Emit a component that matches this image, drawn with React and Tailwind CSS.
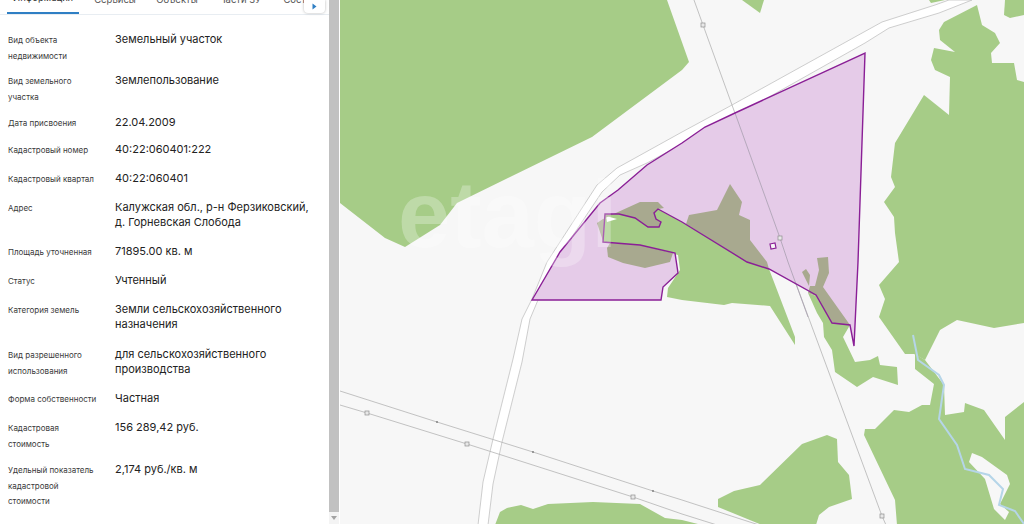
const rows = [
  { h: 'h-[41px]', label: 'Вид объекта недвижимости', value: 'Земельный участок' },
  { h: 'h-[42px]', label: 'Вид земельного участка', value: 'Землепользование' },
  { h: 'h-[27px]', label: 'Дата присвоения', value: '22.04.2009' },
  { h: 'h-[29px]', label: 'Кадастровый номер', value: '40:22:060401:222' },
  { h: 'h-[29px]', label: 'Кадастровый квартал', value: '40:22:060401' },
  { h: 'h-[44px]', label: 'Адрес', value: 'Калужская обл., р-н Ферзиковский, д. Горневская Слобода' },
  { h: 'h-[29px]', label: 'Площадь уточненная', value: '71895.00 кв. м' },
  { h: 'h-[29px]', label: 'Статус', value: 'Учтенный' },
  { h: 'h-[45px]', label: 'Категория земель', value: 'Земли сельскохозяйственного назначения' },
  { h: 'h-[44px]', label: 'Вид разрешенного использования', value: 'для сельскохозяйственного производства' },
  { h: 'h-[29px]', label: 'Форма собственности', value: 'Частная' },
  { h: 'h-[42px]', label: 'Кадастровая стоимость', value: '156 289,42 руб.' },
  { h: 'h-[50px]', label: 'Удельный показатель кадастровой стоимости', value: '2,174 руб./кв. м' },
];

const tabs = [
  { t: 'Информация', w: 'w-[72px]', c: 'text-[#333333]' },
  { t: 'Сервисы', w: 'w-[72px]', c: 'text-[#555555]' },
  { t: 'Объекты', w: 'w-[52px]', c: 'text-[#555555]' },
  { t: 'Части ЗУ', w: 'w-[74px]', c: 'text-[#555555]' },
  { t: 'Состав', w: 'w-[46px]', c: 'text-[#555555]' },
];

const GREEN = '#a6cc87';
const OLIVE = '#a8a98f';
const LINE = '#b4b4b4';
const PURPLE = '#8a1f96';

const greens = [
  '340,0 667,0 689,62 682,70 592,137 457,203 440,225 405,247 385,238 340,203',
  '742,0 764,0 760,13',
  '929,0 945,0 931,3',
  '1005,0 1024,0 1024,15 1010,18 1004,15',
  '977,5 982,25 995,33 1000,43 991,53 992,63 1014,63 1017,80 1024,82 1024,323 994,328 957,320 940,330 925,360 914,354 905,354 879,317 885,299 879,285 899,262 895,233 894,217 884,202 895,187 891,177 895,143 924,95 949,115 950,77 935,70 931,60 934,48 955,52 940,40 939,30 944,22',
  '864,435 865,429 875,429 894,410 909,412 922,405 930,405 934,384 915,369 915,354 925,360 944,385 945,415 964,412 965,403 984,410 1005,440 1005,417 1024,402 1024,525 897,525 895,500',
  '718,499 734,491 760,485 802,444 827,435 837,439 838,462 849,475 852,499 829,507 819,515 816,525 762,525 718,507',
  '495,525 500,512 507,508 521,505 533,509 548,504 593,502 640,504 665,518 682,520 702,525',
  '600,214 610,210 625,208 658,205 769,269 795,337 795,345 770,306 732,303 724,305 682,300 667,297 668,288 680,270 678,255 640,245 600,244',
  '808,293 816,296 832,323 850,325 843,337 855,362 870,360 878,356 880,365 897,367 898,385 873,377 857,387 835,372 832,350 824,337 823,323 817,313',
];

const olives = [
  '597,223 603,219 618,212 640,202 658,202 664,208 658,209 654,213 656,219 661,222 659,227 648,227 635,218 619,214 605,214 603,241',
  '607,248 608,257 623,263 645,268 670,262 673,253 640,245 610,243',
  '686,224 689,215 717,210 730,184 742,202 739,215 750,220 750,240 767,262 769,269 747,262',
  '817,258 828,257 829,273 823,287 850,325 832,323 816,296 808,293 810,286 815,286 819,270',
  '802,272 806,269 810,275 809,286 805,278',
];

const parcel = '532,300 560,252 600,203 618,190 647,165 682,143 705,127 735,113 865,53 858,262 854,346 850,325 832,323 816,295 769,269 747,262 682,222 658,209 654,213 656,219 661,222 659,227 648,227 635,218 619,214 605,214 603,242 640,245 675,253 678,273 663,287 661,300';

const road = '478,525 483,482 493,439 513,359 522,319 532,299 547,262 597,185 617,168 682,132 732,105 882,22 935,5 949,0 972,0 939,13 889,28 865,43 769,97 647,163 620,175 602,192 555,262 538,300 530,319 522,362 502,442 493,484 488,525';

const nodes = [[703, 25], [780, 238], [882, 516], [367, 413], [467, 444], [633, 497]];

export default function App() {
  return (
    <div className="flex h-[525px] w-[1024px] overflow-hidden bg-white font-['Inter',sans-serif]">
      <aside className="relative w-[329px] shrink-0 overflow-hidden">
        <nav className="flex h-[15px] items-end overflow-hidden border-b border-[#e8edf2] pl-[7px]">
          {tabs.map((tab, i) => (
            <div
              key={tab.t}
              className={`${tab.w} flex h-[14px] shrink-0 items-end justify-center whitespace-nowrap pb-[7px] text-[9.5px] leading-[14px] ${tab.c} ${i === 0 ? 'border-b-2 border-[#2f7fc4]' : ''}`}
            >
              {tab.t}
            </div>
          ))}
        </nav>
        <button className="absolute left-[304px] top-0 flex h-[13px] w-[21px] items-center justify-center rounded-b-sm bg-white shadow-[0_0_3px_rgba(0,0,0,0.3)]">
          <svg width="5" height="7" viewBox="0 0 5 7"><path d="M0.5 0.5 L4.5 3.5 L0.5 6.5 Z" fill="#2f7fc4" /></svg>
        </button>
        <div className="px-2 pt-[17px]">
          {rows.map((r) => (
            <div key={r.label} className={`${r.h} flex`}>
              <div className="w-[107px] shrink-0 pr-[14px] pt-px text-[8px] leading-[15.5px] text-[#3a3a3a]">{r.label}</div>
              <div className="w-[204px] text-[11px] leading-[15px] text-[#222222]">{r.value}</div>
            </div>
          ))}
        </div>
      </aside>

      <div className="mr-px flex h-[524px] w-[10px] shrink-0 flex-col items-center bg-[#f4f4f4]">
        <div className="h-[512px] w-full bg-[#c1c1c1]" />
        <svg className="mt-[4px]" width="6" height="4" viewBox="0 0 6 4"><path d="M0 0 H6 L3 4 Z" fill="#a3a3a3" /></svg>
      </div>

      <svg className="block h-[525px] w-[684px] shrink-0" viewBox="340 0 684 525">
        <rect x="340" y="0" width="684" height="525" fill="#f7f7f7" />
        {greens.map((p) => <polygon key={p} points={p} fill={GREEN} />)}
        <polygon points="969,462 972,453 982,457 1007,475 1010,484 1000,504 1009,512 1005,520 994,509 985,479" fill="#f7f7f7" />
        <polyline points="913,335 918,360 939,375 944,385 939,419 957,445 965,469 989,475 1003,489 999,505 1015,511 1024,524" fill="none" stroke="#b5d5e8" strokeWidth="2" />
        <polygon points={road} fill="#ffffff" stroke="#c2c2c2" strokeWidth="0.8" />
        <polyline points="340,391 437,422 533,452 653,491 682,500 759,525" fill="none" stroke={LINE} strokeWidth="0.8" />
        <polyline points="340,405 367,413 467,444 633,497 682,514 717,525" fill="none" stroke={LINE} strokeWidth="0.8" />
        <polyline points="694,0 703,25 732,105 780,238 788,262 882,516 886,525" fill="none" stroke={LINE} strokeWidth="0.8" />
        <polygon points={parcel} fill="#e5cbe8" />
        <polygon points="606,216 617,219 607,222" fill="#ffffff" />
        {olives.map((p) => <polygon key={p} points={p} fill={OLIVE} />)}
        <polyline points="735,113 780,238 788,262 808,317" fill="none" stroke="#a89fb0" strokeWidth="0.8" />
        <polygon points={parcel} fill="none" stroke={PURPLE} strokeWidth="1.4" />
        <polygon points="770,244 775,243 776,248 771,249" fill="#f7f7f7" stroke={PURPLE} strokeWidth="1.2" />
        {nodes.map(([x, y]) => (
          <rect key={`${x}-${y}`} x={x - 2} y={y - 2} width="4" height="4" fill="#e8e8e8" stroke="#8f8f8f" strokeWidth="0.7" />
        ))}
        {[[437, 422], [533, 452], [653, 491]].map(([x, y]) => (
          <circle key={x} cx={x} cy={y} r="0.9" fill="#777777" />
        ))}
        <text x="398" y="247" fontFamily="'Liberation Sans', sans-serif" fontWeight="700" fontSize="94" fill="#ffffff" fillOpacity="0.28">etagi</text>
        <rect x="340" y="524" width="684" height="1" fill="#ffffff" />
      </svg>
    </div>
  );
}
